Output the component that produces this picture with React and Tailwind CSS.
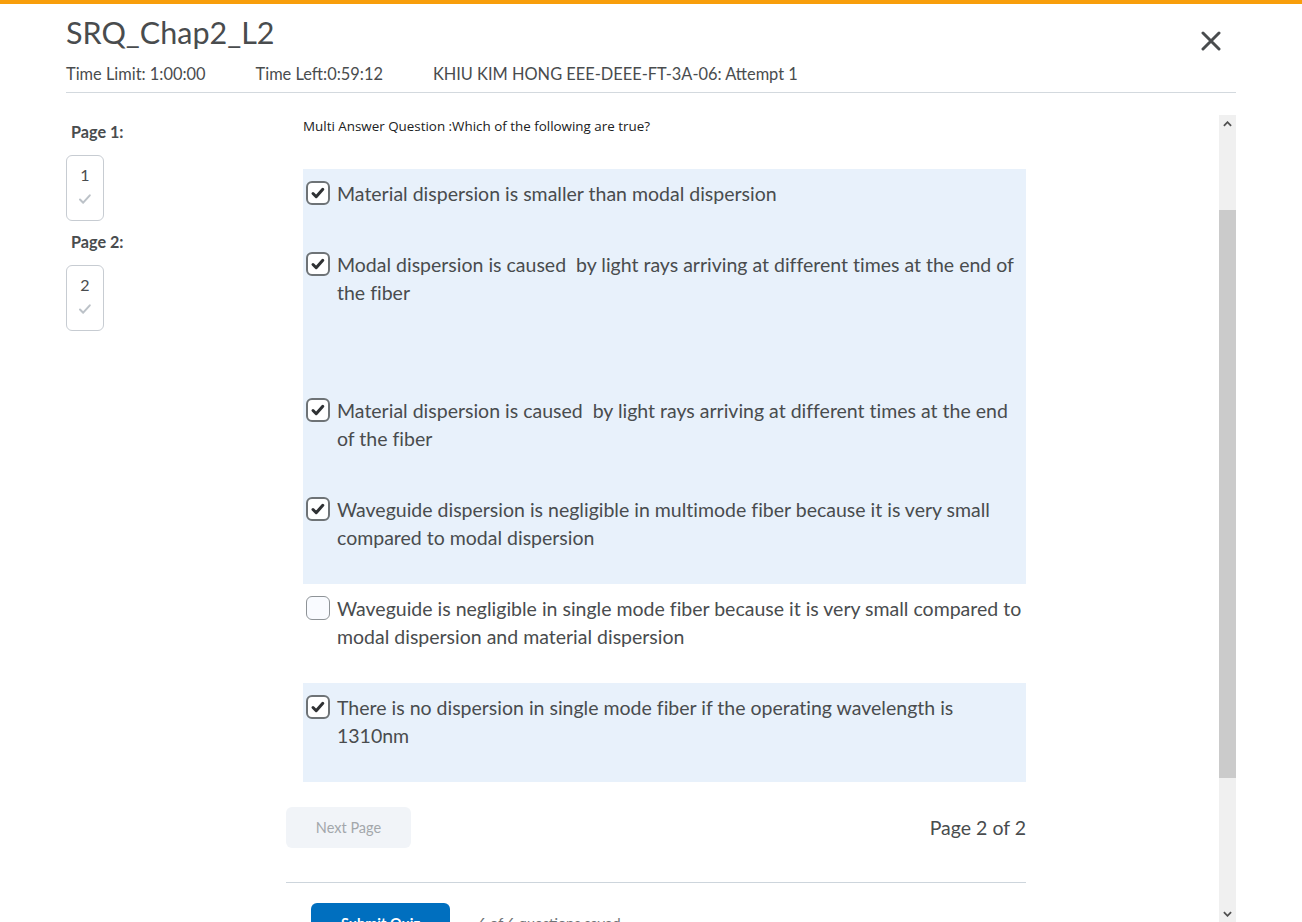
import React from 'react';

const options = [
  { text: 'Material dispersion is smaller than modal dispersion', checked: true },
  { text: 'Modal dispersion is caused\u00a0 by light rays arriving at different times at the end of the fiber', checked: true, extra: true },
  { text: 'Material dispersion is caused\u00a0 by light rays arriving at different times at the end of the fiber', checked: true },
  { text: 'Waveguide dispersion is negligible in multimode fiber because it is very small compared to modal dispersion', checked: true },
  { text: 'Waveguide is negligible in single mode fiber because it is very small compared to modal dispersion and material dispersion', checked: false },
  { text: 'There is no dispersion in single mode fiber if the operating wavelength is 1310nm', checked: true },
];

function Check({ className, width = 2.4 }) {
  return (
    <svg viewBox="0 0 16 16" className={className} fill="none" stroke="currentColor" strokeWidth={width} strokeLinecap="round" strokeLinejoin="round">
      <path d="M3 8.5l3.2 3.2 6.6-7.4" />
    </svg>
  );
}

function PageBox({ n }) {
  return (
    <div className="w-[38px] h-[66px] border border-[#c7ccd2] rounded-[6px] flex flex-col items-center pt-[9px]">
      <span className="text-[16px] leading-[20px] text-[#494c4e]">{n}</span>
      <Check className="w-[16px] h-[16px] mt-[6px] text-[#bcc2c8]" width={2} />
    </div>
  );
}

function Option({ opt }) {
  return (
    <div className={`flex pt-[11px] pb-[32px] pl-[3px] pr-[2px] ${opt.checked ? 'bg-[#e8f1fb]' : 'bg-white'}`}>
      <div className="w-[24px] shrink-0 pt-[1px]">
        {opt.checked ? (
          <div className="w-[24px] h-[24px] rounded-[6px] border-2 border-[#6e7376] bg-white flex items-center justify-center">
            <Check className="w-[16px] h-[16px] text-[#2f3133]" width={3} />
          </div>
        ) : (
          <div className="w-[24px] h-[24px] rounded-[6px] border border-[#8e9397] bg-[#f9fbff]" />
        )}
      </div>
      <div className="pl-[7px] flex-1">
        <p className="text-[19.5px] leading-[28px] text-[#494c4e] [font-variant-ligatures:none]">{opt.text}</p>
        {opt.extra && <div className="h-[47px]" />}
      </div>
    </div>
  );
}

export default function App() {
  return (
    <div className="h-[922px] w-full overflow-hidden bg-white flex flex-col text-[#494c4e]" style={{ fontFamily: 'Lato, "Open Sans", sans-serif' }}>
      <div className="h-[4px] bg-[#f89e0b] shrink-0" />

      {/* header */}
      <div className="mx-[66px] border-b border-[#d3d9de] shrink-0">
        <div className="flex justify-between items-start">
          <h1 className="text-[30.5px] leading-[36px] mt-[10px] text-[#494c4e]">SRQ_Chap2_L2</h1>
          <svg viewBox="0 0 20 20" className="w-[20px] h-[20px] mt-[27px] mr-[15px] text-[#494c4e]" stroke="currentColor" strokeWidth="3" strokeLinecap="round">
            <path d="M2 2l16 16M18 2L2 18" />
          </svg>
        </div>
        <div className="flex text-[16.4px] leading-[20px] mt-[13px] pb-[8px]">
          <span>Time Limit: 1:00:00</span>
          <span className="ml-[50px]">Time Left:0:59:12</span>
          <span className="ml-[50px]">KHIU KIM HONG EEE-DEEE-FT-3A-06: Attempt 1</span>
        </div>
      </div>

      {/* body */}
      <div className="flex flex-1 min-h-0 mt-[22px] mr-[66px]">
        <div className="flex-1 overflow-hidden flex">
          <div className="w-[220px] shrink-0 pl-[66px] box-content">
            <div className="font-bold text-[16.2px] leading-[20px] pl-[5px] mt-[7px]">Page 1:</div>
            <div className="mt-[13px]"><PageBox n="1" /></div>
            <div className="font-bold text-[16.2px] leading-[20px] pl-[5px] mt-[11px]">Page 2:</div>
            <div className="mt-[13px]"><PageBox n="2" /></div>
          </div>

          <div className="w-[740px] shrink-0">
            <div className="pl-[17px]">
              <p className="text-[13.4px] leading-[18px] mt-[2px] text-[#202122]" style={{ fontFamily: '"Open Sans", sans-serif' }}>
                Multi Answer Question :Which of the following are true?
              </p>
              <div className="mt-[34px]">
                {options.map((o, i) => (
                  <Option key={i} opt={o} />
                ))}
              </div>
            </div>

            <div className="flex justify-between items-center mt-[25px]">
              <button className="w-[125px] h-[41px] rounded-[6px] bg-[#f1f4f8] text-[14.5px] text-[#a3a7ab]">Next Page</button>
              <span className="text-[19.5px] text-[#494c4e]">Page 2 of 2</span>
            </div>

            <div className="border-t border-[#cdd5dc] mt-[34px]" />

            <div className="flex items-center pl-[25px] mt-[20px]">
              <button className="w-[139px] h-[42px] rounded-[6px] bg-[#006fbf] text-white text-[14.5px] font-bold">Submit Quiz</button>
              <span className="ml-[28px] text-[14.5px] text-[#6e7376]">6 of 6 questions saved</span>
            </div>
          </div>
        </div>

        {/* scrollbar */}
        <div className="w-[17px] shrink-0 bg-[#f0f0f0] flex flex-col items-center justify-between">
          <div className="w-full flex-1 flex flex-col">
            <div className="h-[17px] flex items-center justify-center">
              <svg viewBox="0 0 10 6" className="w-[9px] h-[6px]" fill="none" stroke="#505050" strokeWidth="2">
                <path d="M1 5l4-4 4 4" />
              </svg>
            </div>
            <div className="h-[78px]" />
            <div className="h-[568px] bg-[#cbcbcb]" />
          </div>
          <div className="h-[17px] flex items-center justify-center">
            <svg viewBox="0 0 10 6" className="w-[9px] h-[6px]" fill="none" stroke="#505050" strokeWidth="2">
              <path d="M1 1l4 4 4-4" />
            </svg>
          </div>
        </div>
      </div>
    </div>
  );
}
